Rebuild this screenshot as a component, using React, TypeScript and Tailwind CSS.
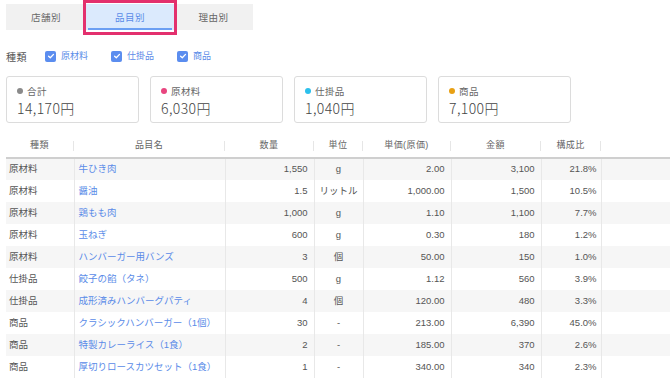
import React from "react";

type Row = {
  kind: string;
  name: string;
  qty: string;
  unit: string;
  price: string;
  amount: string;
  ratio: string;
};

const rows: Row[] = [
  { kind: "原材料", name: "牛ひき肉", qty: "1,550", unit: "g", price: "2.00", amount: "3,100", ratio: "21.8%" },
  { kind: "原材料", name: "醤油", qty: "1.5", unit: "リットル", price: "1,000.00", amount: "1,500", ratio: "10.5%" },
  { kind: "原材料", name: "鶏もも肉", qty: "1,000", unit: "g", price: "1.10", amount: "1,100", ratio: "7.7%" },
  { kind: "原材料", name: "玉ねぎ", qty: "600", unit: "g", price: "0.30", amount: "180", ratio: "1.2%" },
  { kind: "原材料", name: "ハンバーガー用バンズ", qty: "3", unit: "個", price: "50.00", amount: "150", ratio: "1.0%" },
  { kind: "仕掛品", name: "餃子の餡（タネ）", qty: "500", unit: "g", price: "1.12", amount: "560", ratio: "3.9%" },
  { kind: "仕掛品", name: "成形済みハンバーグパティ", qty: "4", unit: "個", price: "120.00", amount: "480", ratio: "3.3%" },
  { kind: "商品", name: "クラシックハンバーガー（1個）", qty: "30", unit: "-", price: "213.00", amount: "6,390", ratio: "45.0%" },
  { kind: "商品", name: "特製カレーライス（1食）", qty: "2", unit: "-", price: "185.00", amount: "370", ratio: "2.6%" },
  { kind: "商品", name: "厚切りロースカツセット（1食）", qty: "1", unit: "-", price: "340.00", amount: "340", ratio: "2.3%" },
];

const cards = [
  { label: "合計", value: "14,170円", dot: "bg-[#8a8a8a]" },
  { label: "原材料", value: "6,030円", dot: "bg-[#e8457f]" },
  { label: "仕掛品", value: "1,040円", dot: "bg-[#2cc0ec]" },
  { label: "商品", value: "7,100円", dot: "bg-[#e8a013]" },
];

function Check({ label }: { label: string }) {
  return (
    <label className="flex items-center gap-[5px] text-[9px] text-[#5a8be8]">
      <span className="flex h-[11px] w-[11px] items-center justify-center rounded-[2px] bg-[#5b8def]">
        <svg width="8" height="8" viewBox="0 0 8 8" fill="none">
          <path d="M1.6 4.2 L3.3 5.8 L6.5 2.4" stroke="#fff" strokeWidth="1.3" strokeLinecap="round" strokeLinejoin="round" />
        </svg>
      </span>
      {label}
    </label>
  );
}

function HeadCell({ w, label, last }: { w: string; label: string; last?: boolean }) {
  return (
    <th className={`${w} p-0 font-normal`}>
      <div className="flex h-[23px] items-center">
        <span className="flex-1 text-center text-[9px] tracking-[0.4px] text-[#666]">{label}</span>
        {!last && <span className="h-[10px] w-px bg-[#e6e6e6]" />}
      </div>
    </th>
  );
}

const base = "text-[9.5px] whitespace-nowrap";
const cell = `${base} text-[#555]`;
const link = `${base} text-[#5a8be8]`;

export default function App() {
  return (
    <div
      className="h-[388px] w-[670px] overflow-hidden bg-white text-[#555]"
      style={{ fontFamily: '"Noto Sans CJK JP", "Noto Sans", sans-serif' }}
    >
      {/* tabs */}
      <div className="flex pl-[6px] pt-[4px]">
        <div className="flex h-[26px] bg-[#f1f1f1]">
          <div className="flex w-[80px] items-center justify-center text-[9.5px] tracking-[0.5px] text-[#666]">店舗別</div>
          <div className="relative flex w-[88px] items-center justify-center bg-[#dbeafd] text-[9.5px] tracking-[0.5px] text-[#5a8be8]">
            品目別
            <span className="absolute bottom-[0px] left-[2px] right-[2px] h-[2px] bg-[#6b9ff3]" />
            <span className="absolute -top-[4px] -bottom-[5px] -left-[3px] -right-[3px] border-[3px] border-[#e3306e]" />
          </div>
          <div className="flex w-[79px] items-center justify-center text-[9.5px] tracking-[0.5px] text-[#666]">理由別</div>
        </div>
      </div>

      {/* filter */}
      <div className="mt-[14px] flex h-[24px] items-center pl-[6px]">
        <span className="mr-[18px] text-[10px] tracking-[0.5px] text-[#555]">種類</span>
        <div className="flex gap-[23px]">
          <Check label="原材料" />
          <Check label="仕掛品" />
          <Check label="商品" />
        </div>
      </div>

      {/* cards */}
      <div className="mt-[8px] flex gap-[11px] pl-[6px]">
        {cards.map((c) => (
          <div key={c.label} className="flex h-[47px] w-[133px] flex-col rounded-[3px] border border-[#dcdcdc] px-[10px] pt-[8px]">
            <div className="flex h-[12px] items-center gap-[4px] text-[9.5px] tracking-[0.4px] text-[#666]">
              <span className={`h-[6px] w-[6px] rounded-full ${c.dot}`} />
              {c.label}
            </div>
            <div className="mt-[1px] text-[14px] font-light leading-[20px] tracking-[0.4px] text-[#444]">{c.value}</div>
          </div>
        ))}
      </div>

      {/* table */}
      <div className="mt-[11px] pl-[6px]">
        <table
          className="w-[664px] table-fixed border-collapse"
          style={{ fontFamily: '"Liberation Sans", "Noto Sans CJK JP", sans-serif' }}
        >
          <thead>
            <tr className="border-b-2 border-[#cfcfcf]">
              <HeadCell w="w-[68px]" label="種類" />
              <HeadCell w="w-[151px]" label="品目名" />
              <HeadCell w="w-[89px]" label="数量" />
              <HeadCell w="w-[49px]" label="単位" />
              <HeadCell w="w-[88px]" label="単価(原価)" />
              <HeadCell w="w-[90px]" label="金額" />
              <HeadCell w="w-[60px]" label="構成比" />
              <th className="p-0" />
            </tr>
          </thead>
          <tbody>
            {rows.map((r, i) => (
              <tr key={i} className={i % 2 === 0 ? "h-[22px] bg-[#f6f6f6]" : "h-[22px] bg-white"}>
                <td className={`border-r border-[#e8e8e8] pl-[3px] ${cell}`}>{r.kind}</td>
                <td className={`border-r border-[#e8e8e8] pl-[4px] ${link}`}>{r.name}</td>
                <td className={`border-r border-[#e8e8e8] pr-[6px] text-right ${cell}`}>{r.qty}</td>
                <td className={`border-r border-[#e8e8e8] text-center ${cell}`}>{r.unit}</td>
                <td className={`border-r border-[#e8e8e8] pr-[6px] text-right ${cell}`}>{r.price}</td>
                <td className={`border-r border-[#e8e8e8] pr-[6px] text-right ${cell}`}>{r.amount}</td>
                <td className={`border-r border-[#e8e8e8] pr-[4px] text-right ${cell}`}>{r.ratio}</td>
                <td />
              </tr>
            ))}
          </tbody>
        </table>
      </div>
    </div>
  );
}
